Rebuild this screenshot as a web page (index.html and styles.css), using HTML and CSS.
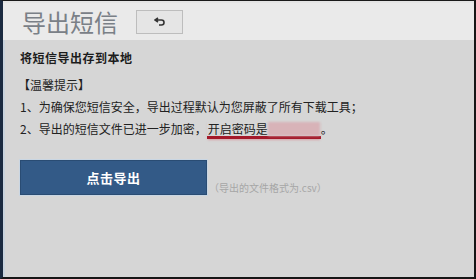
FILE: index.html
```html
<!DOCTYPE html>
<html>
<head>
<meta charset="utf-8">
<link rel="stylesheet" href="styles.css">
</head>
<body>
<div class="frame">
  <div class="header">
    <h1 class="title">导出短信</h1>
    <button class="back" type="button" aria-label="返回">
      <svg width="12" height="10" viewBox="0 0 12 10"><path d="M4 1 L1 3 L4 5 M1.5 3 H7.5 Q10 3 10 5.5 Q10 8 7.5 8 H5" fill="none" stroke="#333" stroke-width="1.6" stroke-linejoin="miter"/></svg>
    </button>
  </div>
  <div class="content">
    <h2 class="heading">将短信导出存到本地</h2>
    <p class="tip-title">【温馨提示】</p>
    <p class="line">1、为确保您短信安全，导出过程默认为您屏蔽了所有下载工具；</p>
    <p class="line">2、导出的短信文件已进一步加密，<span class="mark">开启密码是<span class="blur"></span></span>。</p>
    <div class="actions">
      <button class="export" type="button">点击导出</button>
      <span class="note">（导出的文件格式为.csv）</span>
    </div>
  </div>
</div>
</body>
</html>
```
FILE: styles.css
```css
html, body {
  margin: 0;
  padding: 0;
  background: #d6d6d6;
}
.frame {
  width: 476px;
  height: 279px;
  box-sizing: border-box;
  border-top: 1px solid #1a1a1a;
  border-left: 3px solid #1b2a40;
  border-right: 2px solid #161616;
  border-bottom: 2px solid #161616;
  box-shadow: inset 2px 0 0 #c9d3dd;
  background: #d6d6d6;
  font-family: "Noto Sans CJK SC", "Noto Sans", sans-serif;
  overflow: hidden;
}
.header {
  height: 39px;
  background: #eaeaea;
  border-top: 2px solid #e4e4e4;
  box-sizing: border-box;
  display: flex;
  align-items: center;
  padding-left: 19px;
  gap: 18px;
}
.title {
  margin: 0;
  font-size: 24px;
  font-weight: 400;
  color: #7a8087;
  line-height: 1;
}
.back {
  width: 47px;
  height: 24px;
  box-sizing: border-box;
  border: 1px solid #bdbdbd;
  background: #e5e5e5;
  display: flex;
  align-items: center;
  justify-content: center;
  padding: 0;
  margin-top: 1px;
}
.content {
  padding: 9px 0 0 17px;
}
.heading {
  margin: 0;
  font-size: 12px;
  font-weight: 700;
  color: #1c1c1c;
  line-height: 18px;
  letter-spacing: 0.5px;
}
.tip-title {
  margin: 9px 0 0 -2px;
  font-size: 12px;
  line-height: 18px;
  color: #222;
}
.line {
  margin: 3px 0 0;
  font-size: 12px;
  line-height: 19px;
  color: #222;
}
.mark {
  padding: 0 1px 2px;
  background: linear-gradient(#a4192a, #a4192a) left bottom / 100% 3px no-repeat;
  box-shadow: 0 2px 2px -1px rgba(220, 110, 120, 0.5);
}
.blur {
  display: inline-block;
  width: 52px;
  height: 14px;
  vertical-align: -2px;
  background: #d8b3b8;
  filter: blur(1px);
}
.actions {
  display: flex;
  align-items: flex-end;
  margin-top: 22px;
}
.export {
  width: 187px;
  height: 35px;
  background: #335a87;
  border: 1px solid #2a4c73;
  outline: 1px solid #c9d6e3;
  color: #ffffff;
  font-family: "Noto Sans CJK SC", sans-serif;
  font-size: 13px;
  font-weight: 700;
  letter-spacing: 0.5px;
  padding: 0;
}
.note {
  font-size: 10px;
  color: #a6a6a6;
  margin-left: 2px;
  margin-bottom: 0;
  line-height: 14px;
}
```
